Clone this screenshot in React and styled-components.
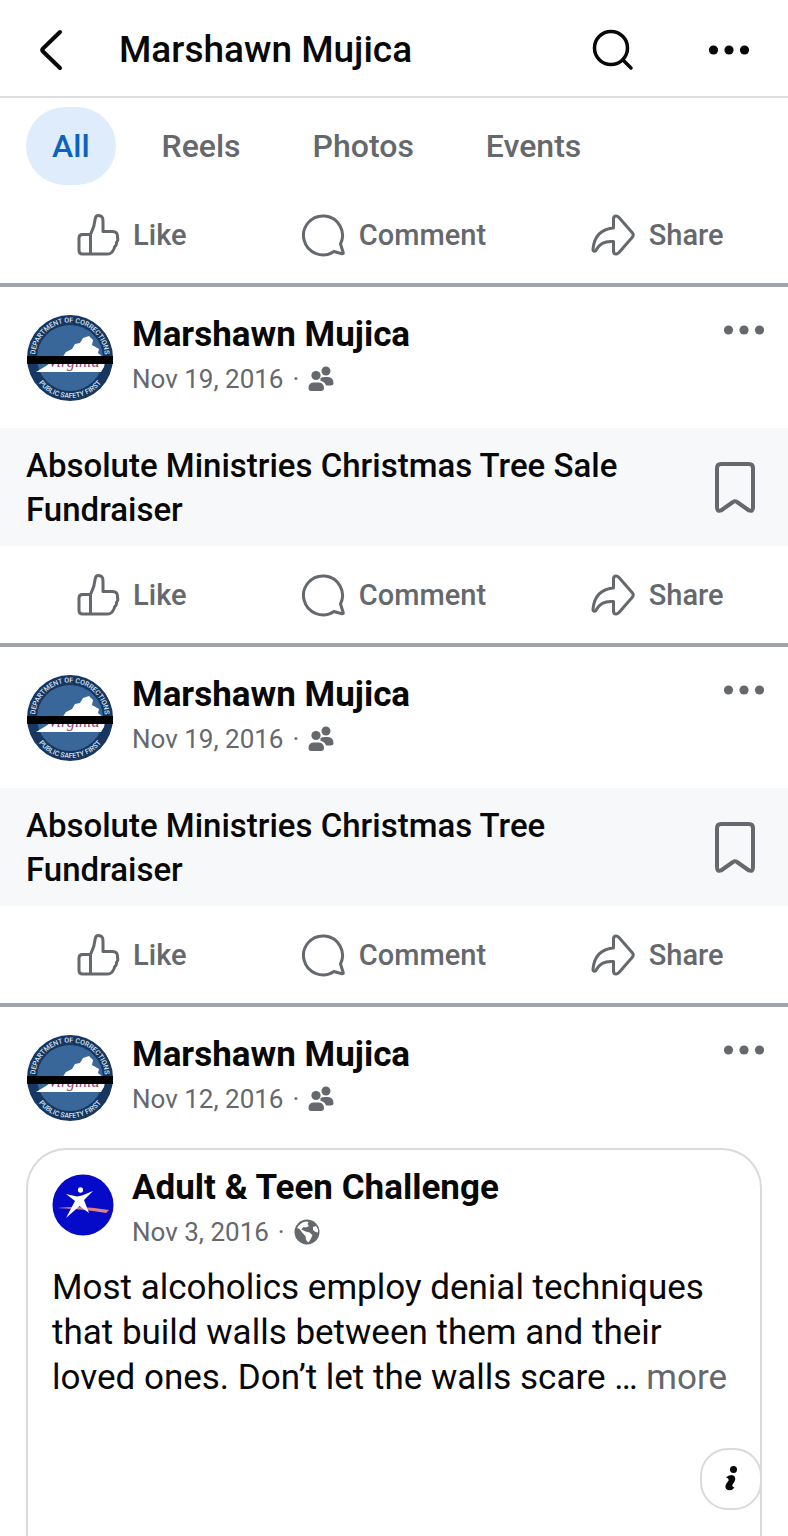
import React from 'react'
import styled, { createGlobalStyle } from 'styled-components'

const GlobalStyle = createGlobalStyle`
  * {
    box-sizing: border-box;
  }

  body {
    margin: 0;
    background: #fff;
    color: #080809;
    font-family: Roboto, 'Liberation Sans', sans-serif;
  }

  h1, h2, h3, p {
    margin: 0;
  }

  svg {
    display: block;
    flex: none;
  }
`

const Page = styled.div`
  display: flex;
  flex-direction: column;
  min-height: 100vh;
`

const TopBar = styled.header`
  display: flex;
  align-items: center;
  height: 98px;
  padding: 4px 37px 0 26px;
  border-bottom: 2px solid #dcdddf;
`

const Title = styled.h1`
  flex: 1;
  padding-left: 41px;
  font-size: 37px;
  font-weight: 500;
  line-height: 44px;
`

const IconButton = styled.button`
  display: flex;
  align-items: center;
  justify-content: center;
  flex: none;
  padding: 0;
  border: 0;
  background: none;
  color: ${({ $muted }) => ($muted ? '#65686c' : '#080809')};
  cursor: pointer;
`

const TopActions = styled.div`
  display: flex;
  align-items: center;
  gap: 72px;
`

const Tabs = styled.nav`
  display: flex;
  gap: 20px;
  padding: 9px 26px 1px;
`

const Tab = styled.button`
  height: 78px;
  padding: 0 26px;
  border: 0;
  border-radius: 39px;
  background: ${({ $active }) => ($active ? '#deecfc' : 'none')};
  color: ${({ $active }) => ($active ? '#0a63bc' : '#65686c')};
  font-family: inherit;
  font-size: 32px;
  font-weight: 500;
  cursor: pointer;
`

const ActionRow = styled.div`
  display: grid;
  grid-template-columns: repeat(3, 1fr);
  height: 101px;
  border-bottom: 4px solid #a0a3a7;
`

const Action = styled.button`
  display: flex;
  align-items: center;
  justify-content: center;
  gap: 13px;
  padding: 0;
  border: 0;
  background: none;
  color: #65686c;
  font-family: inherit;
  font-size: 29px;
  font-weight: 500;
  cursor: pointer;
`

const PostHeader = styled.div`
  display: flex;
  gap: 18px;
  padding: 27px 22px 26px 26px;
`

const Author = styled.div`
  flex: 1;
`

const Name = styled.h2`
  font-size: 35px;
  font-weight: 700;
  line-height: 42px;
`

const Meta = styled.p`
  display: flex;
  align-items: center;
  gap: 9px;
  height: 46px;
  color: #65686c;
  font-size: 26px;
`

const MoreSlot = styled.div`
  padding-top: 10px;
`

const LinkStrip = styled.div`
  display: flex;
  align-items: center;
  justify-content: space-between;
  gap: 80px;
  padding: 16px 32px 14px 26px;
  background: #f7f8fa;
`

const LinkTitle = styled.a`
  color: inherit;
  font-size: 33px;
  font-weight: 500;
  line-height: 44px;
  text-decoration: none;
`

const LastPost = styled.article`
  display: flex;
  flex-direction: column;
  flex: 1;
`

const SharedCard = styled.section`
  position: relative;
  flex: 1;
  min-height: 388px;
  margin: 0 26px;
  padding: 17px 24px;
  border: 2px solid #d8dadd;
  border-bottom: 0;
  border-radius: 40px 40px 0 0;
`

const SharedHeader = styled.div`
  display: flex;
  gap: 18px;
`

const SharedAvatar = styled.div`
  padding-top: 7px;
`

const Body = styled.p`
  padding-top: 10px;
  font-size: 35px;
  line-height: 45px;
`

const MoreLink = styled.a`
  color: #65686c;
  text-decoration: none;
`

const InfoButton = styled.button`
  position: absolute;
  right: -2px;
  bottom: 26px;
  display: flex;
  align-items: center;
  justify-content: center;
  width: 62px;
  height: 62px;
  padding: 0;
  border: 2px solid #d8dadd;
  border-radius: 28px;
  background: #fff;
  cursor: pointer;
`

const line = {
  fill: 'none',
  stroke: 'currentColor',
  strokeLinecap: 'round',
  strokeLinejoin: 'round',
}

const BackIcon = () => (
  <svg width="52" height="52" viewBox="0 0 52 52" {...line} strokeWidth="4">
    <path d="M34 8 L17 24.500 Q15.500 26 17 27.500 L34 44" />
  </svg>
)

const SearchIcon = () => (
  <svg width="44" height="44" viewBox="0 0 44 44" {...line} strokeWidth="3.500">
    <circle cx="20" cy="20" r="16.500" />
    <path d="M32 32 L40 40" />
  </svg>
)

const DotsIcon = () => (
  <svg width="44" height="12" viewBox="0 0 44 12" fill="currentColor">
    <circle cx="6.500" cy="6" r="4.600" />
    <circle cx="22" cy="6" r="4.600" />
    <circle cx="37.500" cy="6" r="4.600" />
  </svg>
)

const LikeIcon = () => (
  <svg width="44" height="44" viewBox="0 0 44 44" {...line} strokeWidth="3">
    <path d="M14.500 21.500 H6.500 Q3 21.500 3 25 V37.500 Q3 41 6.500 41 H31 Q35.500 41 37 37.500 Q38.500 36 38.500 34 Q41 32 40.500 29.500 Q42.500 27 41.500 24.500 Q42 18.500 36.500 18.500 H27 V8 Q27 2.500 22.500 2.500 Q19.500 2.500 19.200 6 Q18.500 14 14.500 21.500 V41" />
  </svg>
)

const CommentIcon = () => (
  <svg width="44" height="44" viewBox="0 0 44 44" {...line} strokeWidth="3">
    <path d="M38.500 31 A19.500 19.500 0 1 0 32 38.500 L40 40.800 Q41.500 41 41.200 39.500 Z" />
  </svg>
)

const ShareIcon = () => (
  <svg width="46" height="44" viewBox="0 0 46 44" {...line} strokeWidth="3">
    <path d="M23.500 15 V6 Q23.500 3 26 3 Q27.500 3 29 4.500 L42.500 20 Q44 22 42.500 24 L29 39.500 Q27.500 41 26 41 Q23.500 41 23.500 38 V28.500 Q11 27.500 6.500 36.500 Q5.500 38.500 4.200 38.200 Q2.800 38.200 3 36 Q5 16.500 23.500 15 Z" />
  </svg>
)

const FriendsIcon = () => (
  <svg width="26" height="26" viewBox="0 0 26 26" fill="#65686c">
    <circle cx="18" cy="5" r="4.500" />
    <circle cx="8" cy="9.500" r="4.600" />
    <path d="M12.500 12 Q14 11 17 11 H20 Q25.500 11.500 25.500 17 Q25.500 19.500 22.500 19.500 H18 Q17 16 12.500 14.800 Z" />
    <path d="M0.500 22 Q0.500 16.500 6 16.500 H10.500 Q15.800 16.500 16 22 Q16 25 13 25 H3.500 Q0.500 25 0.500 22 Z" />
  </svg>
)

const GlobeIcon = () => (
  <svg width="26" height="26" viewBox="0 0 26 26">
    <circle cx="13" cy="13" r="12.500" fill="#65686c" />
    <path d="M3 9 Q6 3.500 12 2.500 L14.500 3 L13.500 5 L15 7 L12 8.500 L9.500 8 L7.500 10.500 L11.500 12.500 L15.500 13.500 L18.500 16 L17 19.500 L14.500 23.500 L12 21 L11.500 17 L8.500 14 L5.500 10 Z" fill="#fff" />
    <path d="M19 8 L22 7 L24 10.500 L24 13.500 L21.500 13 L19 11 Z" fill="#fff" />
  </svg>
)

const BookmarkIcon = () => (
  <svg width="42" height="54" viewBox="0 0 42 54" {...line} stroke="#65686c" strokeWidth="4">
    <path d="M7 3 H35 Q39 3 39 7 V46 Q39 51 35 49.500 L23 41 Q21 39.500 19 41 L7 49.500 Q3 51 3 46 V7 Q3 3 7 3 Z" />
  </svg>
)

const InfoIcon = () => (
  <svg width="16" height="28" viewBox="0 0 16 28" fill="#080809">
    <circle cx="10.500" cy="4.500" r="3.500" />
    <path d="M3 12.500 Q5 10 8.500 10 Q12.800 10.500 12.200 14.500 Q11.800 17 9.500 19.500 Q8.500 21.500 11.500 22.500 Q9.500 25.500 6 25.300 Q1.800 24.800 2.500 20.500 Q3.500 18 5.500 15.800 Q6.300 13.500 3 12.500 Z" />
  </svg>
)

const SealAvatar = ({ id }) => (
  <svg width="88" height="88" viewBox="0 0 88 88">
    <defs>
      <path id={`${id}-top`} d="M10.600 54 A35 35 0 1 1 77.400 54" />
      <path id={`${id}-bottom`} d="M4 44 A40 40 0 0 0 84 44" />
    </defs>
    <circle cx="44" cy="44" r="43" fill="#173762" />
    <circle cx="44" cy="44" r="33" fill="#3a6799" />
    <path d="M10 58 L20 52 L27 47 L36 44 L40 38 L46 35 L49 30 L54 29 L57 24 L63 22 L67 26 L66 31 L73 35 L72 39 L77 43 L79 48 L78 53 L75 58 Z" fill="#fff" />
    <g fontFamily="Roboto, sans-serif" fontSize="7" fontWeight="500" fill="#d5e3ef">
      <text textAnchor="middle">
        <textPath href={`#${id}-top`} startOffset="50%">DEPARTMENT OF CORRECTIONS</textPath>
      </text>
      <text textAnchor="middle">
        <textPath href={`#${id}-bottom`} startOffset="50%">PUBLIC SAFETY FIRST</textPath>
      </text>
    </g>
    <text x="22" y="53" fontFamily="Liberation Serif, serif" fontStyle="italic" fontSize="16" fill="#8c4a6c">Virginia</text>
    <rect x="1" y="42" width="86" height="8" fill="#000" />
  </svg>
)

const ChallengeAvatar = () => (
  <svg width="62" height="62" viewBox="0 0 62 62">
    <circle cx="31" cy="31" r="30.500" fill="#0509c8" />
    <path d="M5 34 Q30 31 57 36 L54 39 Q32 35 5 34 Z" fill="#e08080" />
    <ellipse cx="28.500" cy="16" rx="2.600" ry="2.800" fill="#fff" />
    <path d="M14 20 L25 22.500 L30 21.500 L41 17 L32 26 L37 39 L27.500 32 L14 44 L23 27 Z" fill="#fff" />
  </svg>
)

const PostActions = () => (
  <ActionRow>
    <Action><LikeIcon />Like</Action>
    <Action><CommentIcon />Comment</Action>
    <Action><ShareIcon />Share</Action>
  </ActionRow>
)

const Heading = ({ id, date }) => (
  <PostHeader>
    <SealAvatar id={id} />
    <Author>
      <Name>Marshawn Mujica</Name>
      <Meta>{date} <span>·</span> <FriendsIcon /></Meta>
    </Author>
    <MoreSlot>
      <IconButton $muted aria-label="Post options"><DotsIcon /></IconButton>
    </MoreSlot>
  </PostHeader>
)

const tabs = ['All', 'Reels', 'Photos', 'Events']

const posts = [
  { id: 'post-1', date: 'Nov 19, 2016', title: 'Absolute Ministries Christmas Tree Sale Fundraiser' },
  { id: 'post-2', date: 'Nov 19, 2016', title: 'Absolute Ministries Christmas Tree Fundraiser' },
]

export default function App() {
  return (
    <Page>
      <GlobalStyle />
      <TopBar>
        <IconButton aria-label="Back"><BackIcon /></IconButton>
        <Title>Marshawn Mujica</Title>
        <TopActions>
          <IconButton aria-label="Search"><SearchIcon /></IconButton>
          <IconButton aria-label="More"><DotsIcon /></IconButton>
        </TopActions>
      </TopBar>
      <Tabs>
        {tabs.map((tab, index) => (
          <Tab key={tab} $active={index === 0}>{tab}</Tab>
        ))}
      </Tabs>
      <PostActions />
      {posts.map((post) => (
        <article key={post.id}>
          <Heading id={post.id} date={post.date} />
          <LinkStrip>
            <LinkTitle href="#">{post.title}</LinkTitle>
            <IconButton aria-label="Save link"><BookmarkIcon /></IconButton>
          </LinkStrip>
          <PostActions />
        </article>
      ))}
      <LastPost>
        <Heading id="post-3" date="Nov 12, 2016" />
        <SharedCard>
          <SharedHeader>
            <SharedAvatar><ChallengeAvatar /></SharedAvatar>
            <Author>
              <Name as="h3">Adult &amp; Teen Challenge</Name>
              <Meta>Nov 3, 2016 <span>·</span> <GlobeIcon /></Meta>
            </Author>
          </SharedHeader>
          <Body>
            Most alcoholics employ denial techniques that build walls between them and their loved
            ones. Don’t let the walls scare … <MoreLink href="#">more</MoreLink>
          </Body>
          <InfoButton aria-label="Information"><InfoIcon /></InfoButton>
        </SharedCard>
      </LastPost>
    </Page>
  )
}
